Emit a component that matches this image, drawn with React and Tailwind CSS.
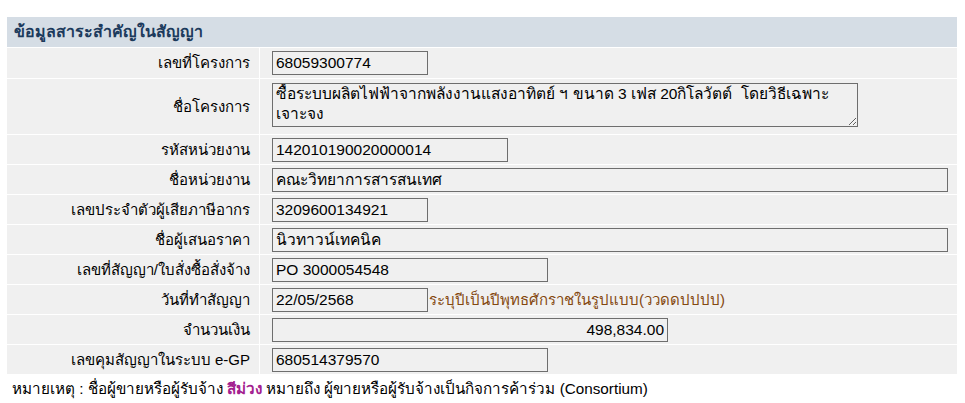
const rows = [
  { label: "เลขที่โครงการ", value: "68059300774", w: "w-[156px]" },
  { label: "ชื่อโครงการ", area: "ซื้อระบบผลิตไฟฟ้าจากพลังงานแสงอาทิตย์ ฯ ขนาด 3 เฟส 20กิโลวัตต์  โดยวิธีเฉพาะเจาะจง" },
  { label: "รหัสหน่วยงาน", value: "142010190020000014", w: "w-[236px]" },
  { label: "ชื่อหน่วยงาน", value: "คณะวิทยาการสารสนเทศ", w: "w-[676px]" },
  { label: "เลขประจำตัวผู้เสียภาษีอากร", value: "3209600134921", w: "w-[156px]" },
  { label: "ชื่อผู้เสนอราคา", value: "นิวทาวน์เทคนิค", w: "w-[676px]" },
  { label: "เลขที่สัญญา/ใบสั่งซื้อสั่งจ้าง", value: "PO 3000054548", w: "w-[276px]" },
  { label: "วันที่ทำสัญญา", value: "22/05/2568", w: "w-[156px]", hint: "ระบุปีเป็นปีพุทธศักราชในรูปแบบ(ววดดปปปป)" },
  { label: "จำนวนเงิน", value: "498,834.00", w: "w-[396px]", right: true },
  { label: "เลขคุมสัญญาในระบบ e-GP", value: "680514379570", w: "w-[276px]" },
];

export default function App() {
  return (
    <div className="min-h-screen bg-white pt-[17px] text-[15px] leading-[20px] text-black font-['Liberation_Sans',sans-serif]">
      <div className="ml-[7px] w-[950px] flex flex-col gap-px">
        {/* HEADER */}
        <div className="h-[30px] bg-[#d5dde5] flex items-center pl-[7px] text-[16px] font-bold text-[#1c3a5c]">
          ข้อมูลสาระสำคัญในสัญญา
        </div>

        {/* ROWS */}
        {rows.map((r, i) => (
          <div key={i} className={`grid grid-cols-[252px_1fr] gap-px ${i === 0 ? "h-[30px]" : r.area ? "h-[55px]" : "h-[29px]"}`}>
            <div className="bg-[#f0f0f0] flex items-center justify-end pr-[9px]">{r.label}</div>
            <div className="bg-[#f0f0f0] flex items-center pl-[12px]">
              {r.area ? (
                <textarea
                  readOnly
                  value={r.area}
                  className="w-[586px] h-[44px] mb-[4px] border border-[#6e6e6e] bg-transparent px-[3px] py-0 text-[15.5px] leading-[20px] outline-none"
                />
              ) : (
                <>
                  <input
                    readOnly
                    value={r.value}
                    className={`${r.w} h-[24px] border border-[#6e6e6e] bg-transparent px-[3px] text-[15.5px] outline-none ${r.right ? "text-right" : ""}`}
                  />
                  {r.hint && <span className="text-[#84480f] ml-px">{r.hint}</span>}
                </>
              )}
            </div>
          </div>
        ))}
      </div>

      {/* NOTE */}
      <p className="mt-[5px] ml-[12px] text-[15.25px]">
        หมายเหตุ : ชื่อผู้ขายหรือผู้รับจ้าง <b className="text-[#a3208f]">สีม่วง</b> หมายถึง ผู้ขายหรือผู้รับจ้างเป็นกิจการค้าร่วม (Consortium)
      </p>
    </div>
  );
}
